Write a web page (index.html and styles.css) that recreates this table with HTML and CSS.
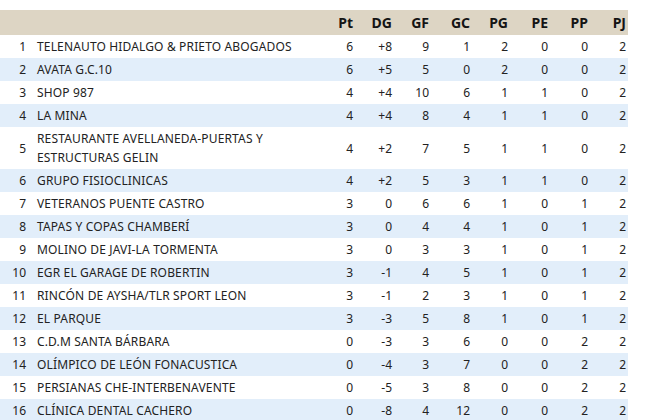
FILE: index.html
```html
<!DOCTYPE html>
<html lang="es">
<head>
<meta charset="utf-8">
<link rel="stylesheet" href="styles.css">
</head>
<body>
<table class="standings">
  <colgroup>
    <col class="c-pos"><col class="c-name">
    <col class="c-pt"><col class="c-dg"><col class="c-gf"><col class="c-gc">
    <col class="c-pg"><col class="c-pe"><col class="c-pp"><col class="c-pj">
  </colgroup>
  <thead>
    <tr><th></th><th></th><th>Pt</th><th>DG</th><th>GF</th><th>GC</th><th>PG</th><th>PE</th><th>PP</th><th>PJ</th></tr>
  </thead>
  <tbody>
    <tr><td class="pos">1</td><td class="name">TELENAUTO HIDALGO &amp; PRIETO ABOGADOS</td><td>6</td><td>+8</td><td>9</td><td>1</td><td>2</td><td>0</td><td>0</td><td>2</td></tr>
    <tr><td class="pos">2</td><td class="name">AVATA G.C.10</td><td>6</td><td>+5</td><td>5</td><td>0</td><td>2</td><td>0</td><td>0</td><td>2</td></tr>
    <tr><td class="pos">3</td><td class="name">SHOP 987</td><td>4</td><td>+4</td><td>10</td><td>6</td><td>1</td><td>1</td><td>0</td><td>2</td></tr>
    <tr><td class="pos">4</td><td class="name">LA MINA</td><td>4</td><td>+4</td><td>8</td><td>4</td><td>1</td><td>1</td><td>0</td><td>2</td></tr>
    <tr><td class="pos">5</td><td class="name">RESTAURANTE AVELLANEDA-PUERTAS Y ESTRUCTURAS GELIN</td><td>4</td><td>+2</td><td>7</td><td>5</td><td>1</td><td>1</td><td>0</td><td>2</td></tr>
    <tr><td class="pos">6</td><td class="name">GRUPO FISIOCLINICAS</td><td>4</td><td>+2</td><td>5</td><td>3</td><td>1</td><td>1</td><td>0</td><td>2</td></tr>
    <tr><td class="pos">7</td><td class="name">VETERANOS PUENTE CASTRO</td><td>3</td><td>0</td><td>6</td><td>6</td><td>1</td><td>0</td><td>1</td><td>2</td></tr>
    <tr><td class="pos">8</td><td class="name">TAPAS Y COPAS CHAMBERÍ</td><td>3</td><td>0</td><td>4</td><td>4</td><td>1</td><td>0</td><td>1</td><td>2</td></tr>
    <tr><td class="pos">9</td><td class="name">MOLINO DE JAVI-LA TORMENTA</td><td>3</td><td>0</td><td>3</td><td>3</td><td>1</td><td>0</td><td>1</td><td>2</td></tr>
    <tr><td class="pos">10</td><td class="name">EGR EL GARAGE DE ROBERTIN</td><td>3</td><td>-1</td><td>4</td><td>5</td><td>1</td><td>0</td><td>1</td><td>2</td></tr>
    <tr><td class="pos">11</td><td class="name">RINCÓN DE AYSHA/TLR SPORT LEON</td><td>3</td><td>-1</td><td>2</td><td>3</td><td>1</td><td>0</td><td>1</td><td>2</td></tr>
    <tr><td class="pos">12</td><td class="name">EL PARQUE</td><td>3</td><td>-3</td><td>5</td><td>8</td><td>1</td><td>0</td><td>1</td><td>2</td></tr>
    <tr><td class="pos">13</td><td class="name">C.D.M SANTA BÁRBARA</td><td>0</td><td>-3</td><td>3</td><td>6</td><td>0</td><td>0</td><td>2</td><td>2</td></tr>
    <tr><td class="pos">14</td><td class="name">OLÍMPICO DE LEÓN FONACUSTICA</td><td>0</td><td>-4</td><td>3</td><td>7</td><td>0</td><td>0</td><td>2</td><td>2</td></tr>
    <tr><td class="pos">15</td><td class="name">PERSIANAS CHE-INTERBENAVENTE</td><td>0</td><td>-5</td><td>3</td><td>8</td><td>0</td><td>0</td><td>2</td><td>2</td></tr>
    <tr><td class="pos">16</td><td class="name">CLÍNICA DENTAL CACHERO</td><td>0</td><td>-8</td><td>4</td><td>12</td><td>0</td><td>0</td><td>2</td><td>2</td></tr>
  </tbody>
</table>
</body>
</html>
```
FILE: styles.css
```css
html, body {
  margin: 0;
  background: #ffffff;
}
body {
  padding-top: 10px;
}
.standings {
  border-collapse: collapse;
  border-spacing: 0;
  table-layout: fixed;
  width: 628px;
  font-family: "Noto Sans", "DejaVu Sans", sans-serif;
  font-size: 12px;
  color: #222222;
}
.c-pos { width: 30px; }
.c-name { width: 286px; }
.c-pt { width: 39px; }
.c-dg { width: 39px; }
.c-gf { width: 37px; }
.c-gc { width: 41px; }
.c-pg { width: 38px; }
.c-pe { width: 40px; }
.c-pp { width: 40px; }
.c-pj { width: 38px; }

.standings thead tr {
  background: #ddd5c4;
}
.standings th {
  height: 25px;
  padding: 0 2px 0 0;
  text-align: right;
  font-size: 14px;
  font-weight: bold;
  color: #141414;
  line-height: 25px;
}
.standings td {
  padding: 2px 2px 2px 0;
  line-height: 19px;
  text-align: right;
  vertical-align: middle;
}
.standings tbody tr:nth-child(even) {
  background: #e2eefa;
}
.standings td.pos {
  padding-right: 4px;
}
.standings td.name {
  text-align: left;
  padding-left: 7px;
  padding-right: 20px;
  letter-spacing: 0.15px;
}
```
